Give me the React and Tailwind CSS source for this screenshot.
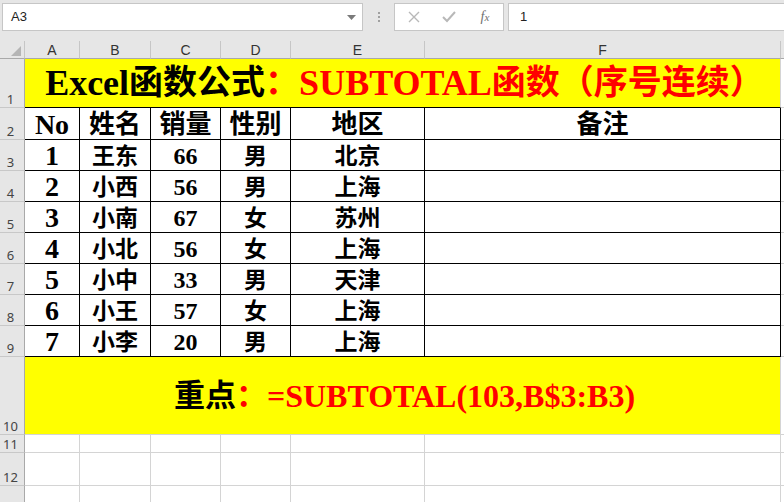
import React from 'react';

const SERIF = "font-['Liberation_Serif','Noto_Sans_CJK_SC',serif]";

const COLS = [
  { key: 'A', w: 'w-[55px]' },
  { key: 'B', w: 'w-[71px]' },
  { key: 'C', w: 'w-[70px]' },
  { key: 'D', w: 'w-[70px]' },
  { key: 'E', w: 'w-[134px]' },
  { key: 'F', w: 'w-[356px]' },
];

const ROWS = [
  ['1', '王东', '66', '男', '北京'],
  ['2', '小西', '56', '男', '上海'],
  ['3', '小南', '67', '女', '苏州'],
  ['4', '小北', '56', '女', '上海'],
  ['5', '小中', '33', '男', '天津'],
  ['6', '小王', '57', '女', '上海'],
  ['7', '小李', '20', '男', '上海'],
];

// 데이터 셀 글자 크기 (열별)
const DATA_SIZE = ['text-[28px]', 'text-[23px]', 'text-[24px]', 'text-[23px]', 'text-[23px]', 'text-[23px]'];

function RowHead({ n, h }) {
  return (
    <div className={`${h} w-[25px] shrink-0 flex items-end justify-center pr-[3px] pb-[1px] bg-[#e6e6e6] border-r border-b border-r-[#a9a9a9] border-b-[#c8c8c8] text-[13px] leading-none text-[#444]`}>
      {n}
    </div>
  );
}

function Rest({ h, border = 'border-b-[#d4d4d4]' }) {
  return <div className={`${h} flex-1 bg-white border-b ${border}`} />;
}

function TopBar() {
  return (
    <div className="h-[41px] bg-[#e6e6e6] flex items-start pt-[3px] pl-[2px] font-['Liberation_Sans',sans-serif]">
      {/* 이름 상자 */}
      <div className="w-[361px] h-[28px] bg-white border border-[#c6c6c6] flex items-center justify-between pl-[8px] pr-[6px]">
        <span className="text-[13px] text-[#222]">A3</span>
        <svg width="9" height="6" viewBox="0 0 9 6" className="mt-[1px]">
          <path d="M0 0 H9 L4.5 5 Z" fill="#7a7a7a" />
        </svg>
      </div>
      <div className="w-[31px] h-[28px] flex flex-col items-center justify-center gap-[2px]">
        <span className="w-[2px] h-[2px] bg-[#a0a0a0]" />
        <span className="w-[2px] h-[2px] bg-[#a0a0a0]" />
        <span className="w-[2px] h-[2px] bg-[#a0a0a0]" />
      </div>
      {/* 수식 버튼 */}
      <div className="w-[110px] h-[28px] bg-white border border-[#c6c6c6] flex items-center">
        <div className="w-[36px] flex justify-center pl-[1px]">
          <svg width="12" height="12" viewBox="0 0 12 12">
            <path d="M1 1 L11 11 M11 1 L1 11" stroke="#b8b8b8" strokeWidth="1.4" />
          </svg>
        </div>
        <div className="w-[36px] flex justify-center">
          <svg width="14" height="12" viewBox="0 0 14 12">
            <path d="M1 6 L5 10 L13 1" stroke="#b8b8b8" strokeWidth="2" fill="none" />
          </svg>
        </div>
        <div className="w-[36px] flex justify-center">
          <span className="font-['Liberation_Serif',serif] italic text-[14px] text-[#707070] leading-none">
            f<span className="text-[11px]">x</span>
          </span>
        </div>
      </div>
      <div className="w-[4px]" />
      <div className="flex-1 h-[28px] bg-white border border-r-0 border-[#c6c6c6] flex items-center pl-[11px]">
        <span className="text-[13px] text-[#222]">1</span>
      </div>
    </div>
  );
}

function ColHeader() {
  return (
    <div className="flex h-[18px]">
      <div className="w-[25px] h-[18px] shrink-0 bg-[#e6e6e6] border-r border-b border-r-[#c6c6c6] border-b-[#a9a9a9] flex items-end justify-end pr-[3px] pb-[2px]">
        <svg width="10" height="10" viewBox="0 0 10 10">
          <path d="M10 0 V10 H0 Z" fill="#b5b5b5" />
        </svg>
      </div>
      {COLS.map((c) => (
        <div
          key={c.key}
          className={`${c.w} h-[18px] shrink-0 bg-[#e6e6e6] border-r border-b border-r-[#c6c6c6] border-b-[#a9a9a9] flex items-end justify-center pb-[1px] font-['Liberation_Sans',sans-serif] text-[14px] leading-none text-[#333]`}
        >
          {c.key}
        </div>
      ))}
      <div className="flex-1 h-[18px] bg-[#e6e6e6] border-b border-b-[#a9a9a9]" />
    </div>
  );
}

export default function App() {
  return (
    <div className="w-[784px] h-[502px] overflow-hidden bg-white">
      <TopBar />
      <ColHeader />

      {/* 1행: 제목 */}
      <div className="flex">
        <RowHead n="1" h="h-[49px]" />
        <div className={`w-[756px] h-[49px] shrink-0 bg-[#ffff00] border-r border-b border-r-[#d4d4d4] border-b-black flex items-center justify-center pl-[4px] ${SERIF} font-bold leading-none`}>
          <span className="text-[36px] text-black">Excel</span>
          <span className="text-[34px] text-black">函数公式</span>
          <span className="text-[34px] text-[#ff0000]">：</span>
          <span className="text-[36px] text-[#ff0000]">SUBTOTAL</span>
          <span className="text-[34px] text-[#ff0000]">函数（序号连续）</span>
        </div>
        <Rest h="h-[49px]" />
      </div>

      {/* 2행: 헤더 */}
      <div className="flex">
        <RowHead n="2" h="h-[32px]" />
        {['No', '姓名', '销量', '性别', '地区', '备注'].map((t, i) => (
          <div
            key={t}
            className={`${COLS[i].w} h-[32px] shrink-0 border-r border-b border-black flex items-center justify-center pt-[2px] ${SERIF} font-bold leading-none ${i === 0 ? 'text-[28px]' : 'text-[26px]'} text-black`}
          >
            {t}
          </div>
        ))}
        <Rest h="h-[32px]" />
      </div>

      {/* 3~9행: 데이터 */}
      {ROWS.map((r, ri) => (
        <div key={ri} className="flex">
          <RowHead n={String(ri + 3)} h="h-[31px]" />
          {[...r, ''].map((t, i) => (
            <div
              key={i}
              className={`${COLS[i].w} h-[31px] shrink-0 border-r border-b border-black flex items-center justify-center pt-[2px] ${SERIF} font-bold leading-none ${DATA_SIZE[i]} text-black`}
            >
              {t}
            </div>
          ))}
          <Rest h="h-[31px]" />
        </div>
      ))}

      {/* 10행: 중점 */}
      <div className="flex">
        <RowHead n="10" h="h-[78px]" />
        <div className={`w-[756px] h-[78px] shrink-0 bg-[#ffff00] border-r border-b border-[#d4d4d4] flex items-center justify-center pl-[4px] ${SERIF} font-bold leading-none`}>
          <span className="text-[31px] text-black">重点</span>
          <span className="text-[31px] text-[#ff0000]">：</span>
          <span className="text-[32px] text-[#ff0000]">=SUBTOTAL(103,B$3:B3)</span>
        </div>
        <Rest h="h-[78px]" />
      </div>

      {/* 빈 행 (13행 번호는 화면 밖) */}
      {[
        ['11', 'h-[18px]'],
        ['12', 'h-[33px]'],
        ['', 'h-[33px]'],
      ].map(([n, h], i) => (
        <div key={i} className="flex">
          <RowHead n={n} h={h} />
          {COLS.map((c) => (
            <div key={c.key} className={`${c.w} ${h} shrink-0 border-r border-b border-[#d4d4d4]`} />
          ))}
          <Rest h={h} />
        </div>
      ))}
    </div>
  );
}
